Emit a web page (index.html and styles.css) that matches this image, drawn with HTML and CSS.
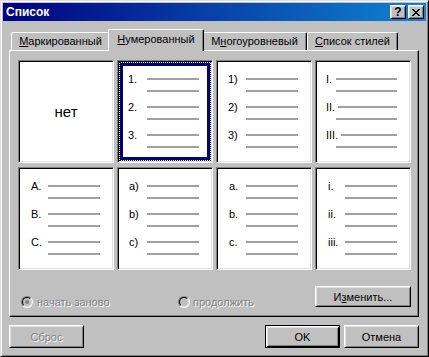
FILE: index.html
```html
<!DOCTYPE html>
<html lang="ru">
<head>
<meta charset="utf-8">
<title>Список</title>
<link rel="stylesheet" href="styles.css">
</head>
<body>
<div class="window">
  <div class="titlebar">
    <span class="title">Список</span>
    <div class="tb-buttons">
      <span class="tbtn help">?</span>
      <span class="tbtn close"><svg width="8" height="7" viewBox="0 0 8 7" shape-rendering="crispEdges"><path fill="#000" d="M0 0h2v1H0zM6 0h2v1H6zM1 1h2v1H1zM5 1h2v1H5zM2 2h4v1H2zM3 3h2v1H3zM2 4h4v1H2zM1 5h2v1H1zM5 5h2v1H5zM0 6h2v1H0zM6 6h2v1H6z"/></svg></span>
    </div>
  </div>
  <div class="client">
    <div class="tabs">
      <div class="tab t1"><u>М</u>аркированный</div>
      <div class="tab t2 active"><u>Н</u>умерованный</div>
      <div class="tab t3">М<u>н</u>огоуровневый</div>
      <div class="tab t4"><u>С</u>писок стилей</div>
    </div>
    <div class="panel">
      <div class="grid">
        <div class="cell none">нет</div>
        <div class="cell c-a selected">
          <div class="item"><div class="r1"><span class="num">1.</span><span class="line"></span></div><div class="r2"><span class="line"></span></div></div>
          <div class="item"><div class="r1"><span class="num">2.</span><span class="line"></span></div><div class="r2"><span class="line"></span></div></div>
          <div class="item"><div class="r1"><span class="num">3.</span><span class="line"></span></div><div class="r2"><span class="line"></span></div></div>
        </div>
        <div class="cell c-b">
          <div class="item"><div class="r1"><span class="num">1)</span><span class="line"></span></div><div class="r2"><span class="line"></span></div></div>
          <div class="item"><div class="r1"><span class="num">2)</span><span class="line"></span></div><div class="r2"><span class="line"></span></div></div>
          <div class="item"><div class="r1"><span class="num">3)</span><span class="line"></span></div><div class="r2"><span class="line"></span></div></div>
        </div>
        <div class="cell c-roman">
          <div class="item"><div class="r1"><span class="num">I.</span><span class="line"></span></div><div class="r2"><span class="line"></span></div></div>
          <div class="item"><div class="r1"><span class="num">II.</span><span class="line"></span></div><div class="r2"><span class="line"></span></div></div>
          <div class="item"><div class="r1"><span class="num">III.</span><span class="line"></span></div><div class="r2"><span class="line"></span></div></div>
        </div>
        <div class="cell c-c">
          <div class="item"><div class="r1"><span class="num">A.</span><span class="line"></span></div><div class="r2"><span class="line"></span></div></div>
          <div class="item"><div class="r1"><span class="num">B.</span><span class="line"></span></div><div class="r2"><span class="line"></span></div></div>
          <div class="item"><div class="r1"><span class="num">C.</span><span class="line"></span></div><div class="r2"><span class="line"></span></div></div>
        </div>
        <div class="cell c-b">
          <div class="item"><div class="r1"><span class="num">a)</span><span class="line"></span></div><div class="r2"><span class="line"></span></div></div>
          <div class="item"><div class="r1"><span class="num">b)</span><span class="line"></span></div><div class="r2"><span class="line"></span></div></div>
          <div class="item"><div class="r1"><span class="num">c)</span><span class="line"></span></div><div class="r2"><span class="line"></span></div></div>
        </div>
        <div class="cell c-c">
          <div class="item"><div class="r1"><span class="num">a.</span><span class="line"></span></div><div class="r2"><span class="line"></span></div></div>
          <div class="item"><div class="r1"><span class="num">b.</span><span class="line"></span></div><div class="r2"><span class="line"></span></div></div>
          <div class="item"><div class="r1"><span class="num">c.</span><span class="line"></span></div><div class="r2"><span class="line"></span></div></div>
        </div>
        <div class="cell c-c">
          <div class="item"><div class="r1"><span class="num">i.</span><span class="line"></span></div><div class="r2"><span class="line"></span></div></div>
          <div class="item"><div class="r1"><span class="num">ii.</span><span class="line"></span></div><div class="r2"><span class="line"></span></div></div>
          <div class="item"><div class="r1"><span class="num">iii.</span><span class="line"></span></div><div class="r2"><span class="line"></span></div></div>
        </div>
      </div>
      <div class="options">
        <label class="opt opt1"><span class="radio"><span class="radio-in"><span class="dot"></span></span></span><span class="disabled-text">начать заново</span></label>
        <label class="opt opt2"><span class="radio"><span class="radio-in"></span></span><span class="disabled-text">продолжить</span></label>
        <span class="btn change">И<u>з</u>менить...</span>
      </div>
    </div>
    <div class="footer">
      <span class="btn"><span class="disabled-text">Сброс</span></span>
      <span class="spacer"></span>
      <span class="btn default">OK</span>
      <span class="btn">Отмена</span>
    </div>
  </div>
</div>
</body>
</html>
```
FILE: styles.css
```css
* { box-sizing: border-box; }
html, body { margin: 0; padding: 0; background: #c0c0c0; }
body {
  font-family: "Liberation Sans", Arial, sans-serif;
  font-size: 11px;
  color: #000;
}
u { text-decoration: underline; text-underline-offset: 1px; }

.window {
  width: 429px;
  height: 357px;
  background: #c0c0c0;
  border: 1px solid;
  border-color: #dfdfdf #000 #000 #dfdfdf;
  box-shadow: inset 1px 1px #fff, inset -1px -1px #808080;
  padding: 2px;
  display: flex;
  flex-direction: column;
}

.titlebar {
  height: 18px;
  flex: 0 0 18px;
  background: linear-gradient(to right, #000080, #1084d0);
  display: flex;
  align-items: center;
  justify-content: space-between;
  padding: 0 2px 0 3px;
}
.title {
  color: #fff;
  font-weight: bold;
  font-size: 12px;
}
.tb-buttons { display: flex; gap: 2px; }
.tbtn {
  width: 16px;
  height: 14px;
  background: #c0c0c0;
  border: 1px solid;
  border-color: #fff #000 #000 #fff;
  box-shadow: inset 1px 1px #dfdfdf, inset -1px -1px #808080;
  display: flex;
  align-items: center;
  justify-content: center;
}
.tbtn.help { font-weight: bold; font-size: 12px; line-height: 12px; padding-bottom: 1px; }
.tbtn.close svg { display: block; }

.client {
  flex: 1;
  padding: 0 7px 0 6px;
  display: flex;
  flex-direction: column;
}

.tabs {
  height: 29px;
  flex: 0 0 29px;
  display: flex;
  align-items: flex-end;
  padding-left: 2px;
}
.tab {
  height: 18px;
  border-top: 1px solid #fff;
  border-left: 1px solid #fff;
  border-right: 1px solid #000;
  border-radius: 2px 2px 0 0;
  box-shadow: inset -1px 0 #808080;
  display: flex;
  align-items: center;
  justify-content: center;
  white-space: nowrap;
  padding-bottom: 1px;
}
.t1 { width: 99px; }
.t2 { width: 96px; }
.t3 { width: 105px; }
.t4 { width: 91px; }
.tab.active {
  height: 22px;
  margin: 0 -2px -1px;
  position: relative;
  z-index: 1;
  background: #c0c0c0;
  padding-bottom: 3px;
}

.panel {
  width: 410px;
  height: 267px;
  flex: 0 0 267px;
  border: 1px solid;
  border-color: #fff #000 #000 #fff;
  box-shadow: inset -1px -1px #808080;
  padding: 9px 0 0 8px;
}

.grid {
  display: grid;
  grid-template-columns: repeat(4, 96px);
  grid-template-rows: repeat(2, 103px);
  column-gap: 3px;
  row-gap: 4px;
}
.cell {
  position: relative;
  background: #fff;
  border: 1px solid;
  border-color: #808080 #fff #fff #808080;
  box-shadow: inset 1px 1px #000, inset -1px -1px #dfdfdf;
  padding: 12px 13px 0 0;
}
.cell.none {
  display: flex;
  align-items: center;
  justify-content: center;
  padding: 0 0 1px 0;
  font-size: 15px;
}
.cell.selected::after {
  content: "";
  position: absolute;
  inset: 1px;
  border: 1px dotted #000;
  box-shadow: inset 0 0 0 3px #000080;
}
.c-a { --no: 11px; --ls: 30px; }
.c-b { --no: 12px; --ls: 30px; }
.c-c { --no: 13px; --ls: 30px; }
.c-roman { --no: 11px; --ls: 21px; }

.item { height: 28px; }
.r1 {
  display: flex;
  align-items: center;
  height: 12px;
  padding-left: calc(var(--no) - 1px);
}
.num {
  min-width: calc(var(--ls) - var(--no));
  padding-right: 3px;
  line-height: 12px;
  white-space: nowrap;
}
.line {
  display: block;
  height: 2px;
  background: #a0a0a0;
}
.r1 .line { flex: 1; }
.r2 { padding-top: 5px; }
.r2 .line { margin-left: calc(var(--ls) - 1px); }

.options {
  display: flex;
  align-items: flex-end;
  width: 393px;
  height: 21px;
  margin-top: 16px;
}
.opt {
  display: flex;
  align-items: center;
  gap: 4px;
  height: 13px;
  margin-bottom: -1px;
}
.opt1 { margin-left: 3px; width: 157px; }
.opt2 { gap: 3px; }
.radio {
  width: 12px;
  height: 12px;
  border-radius: 50%;
  border: 1px solid;
  border-color: #808080 #fff #fff #808080;
  display: flex;
  align-items: center;
  justify-content: center;
  flex: 0 0 12px;
}
.radio-in {
  width: 10px;
  height: 10px;
  border-radius: 50%;
  border: 1px solid;
  border-color: #000 #dfdfdf #dfdfdf #000;
  background: #c0c0c0;
  display: flex;
  align-items: center;
  justify-content: center;
}
.dot {
  width: 4px;
  height: 4px;
  border-radius: 50%;
  background: #808080;
}
.disabled-text {
  color: #808080;
  text-shadow: 1px 1px 0 #fff;
}

.btn {
  display: flex;
  align-items: center;
  justify-content: center;
  width: 75px;
  height: 23px;
  background: #c0c0c0;
  border: 1px solid;
  border-color: #fff #000 #000 #fff;
  box-shadow: inset 1px 1px #dfdfdf, inset -1px -1px #808080;
  white-space: nowrap;
}
.btn.change { margin-left: auto; width: 96px; height: 21px; }
.btn.default {
  border-color: #000;
  box-shadow: inset 1px 1px #fff, inset -1px -1px #000, inset 2px 2px #dfdfdf, inset -2px -2px #808080;
}

.footer {
  display: flex;
  gap: 4px;
  margin-top: 8px;
  width: 410px;
}
.spacer { flex: 1; }
```
